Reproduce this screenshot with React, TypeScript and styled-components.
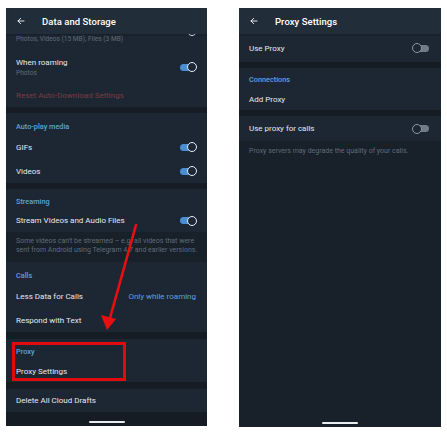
import React from "react";
import styled, { createGlobalStyle } from "styled-components";

const Global = createGlobalStyle`
  html, body { margin: 0; padding: 0; background: #ffffff; }
  body { font-family: Roboto, "Noto Sans", "Liberation Sans", sans-serif; }
`;

const C = {
  header: "#222d3a",
  row: "#1d2733",
  gap: "#151c24",
  info: "#18202a",
  text: "#e6eaee",
  sub: "#5f6c78",
  blue: "#5ea2dc",
  red: "#7a3b44",
};

const Page = styled.div`
  position: relative;
  display: flex;
  gap: 32px;
  padding: 8px 6px 0 6px;
  width: 447px;
  height: 434px;
  box-sizing: border-box;
`;

const Panel = styled.div<{ $w: number; $h: number; $bg: string }>`
  width: ${(p) => p.$w}px;
  height: ${(p) => p.$h}px;
  background: ${(p) => p.$bg};
  display: flex;
  flex-direction: column;
  overflow: hidden;
  position: relative;
`;

const Header = styled.div`
  height: 26px;
  flex: none;
  background: ${C.header};
  display: flex;
  align-items: center;
  padding-left: 11px;
  position: relative;
  z-index: 2;
  box-shadow: 0 1px 2px rgba(0, 0, 0, 0.25);
`;

const Title = styled.div`
  margin-left: 17px;
  color: #ffffff;
  font-size: 9.5px;
  font-weight: 500;
  letter-spacing: 0.05px;
`;

const Row = styled.div<{ $h: number; $pr?: number }>`
  height: ${(p) => p.$h}px;
  flex: none;
  background: ${C.row};
  display: flex;
  align-items: center;
  justify-content: space-between;
  padding: 0 ${(p) => p.$pr ?? 11}px 0 10px;
  box-sizing: border-box;
`;

const PartialRow = styled(Row)`
  align-items: flex-start;
  overflow: hidden;
`;

const Label = styled.div<{ $color?: string }>`
  color: ${(p) => p.$color || C.text};
  font-size: 8px;
  line-height: 11px;
  white-space: nowrap;
`;

const Sub = styled.div`
  color: ${C.sub};
  font-size: 6.6px;
  line-height: 10px;
  white-space: nowrap;
`;

const Stack = styled.div`
  display: flex;
  flex-direction: column;
`;

const Value = styled.div`
  color: ${C.blue};
  font-size: 8px;
  white-space: nowrap;
`;

const SectionHeader = styled.div<{ $h: number; $pt: number }>`
  height: ${(p) => p.$h}px;
  flex: none;
  box-sizing: border-box;
  padding: ${(p) => p.$pt}px 10px 0 10px;
  background: ${C.row};
  color: ${C.blue};
  font-size: 7.3px;
  font-weight: 500;
  line-height: 10px;
`;

const Gap = styled.div<{ $h: number }>`
  height: ${(p) => p.$h}px;
  flex: none;
  background: ${C.gap};
`;

const Info = styled.div<{ $h?: number; $pt: number }>`
  ${(p) => (p.$h ? `height: ${p.$h}px;` : "flex: 1;")}
  flex-shrink: 0;
  box-sizing: border-box;
  padding: ${(p) => p.$pt}px 10px 0 10px;
  background: ${C.info};
  color: ${C.sub};
  font-size: 7px;
  line-height: 9px;
  white-space: nowrap;
`;

const Toggle = styled.span<{ $on: boolean; $mt?: number }>`
  position: relative;
  flex: none;
  width: 16px;
  height: 7px;
  border-radius: 4px;
  margin-top: ${(p) => p.$mt || 0}px;
  background: ${(p) => (p.$on ? "#4a8fd4" : "#6f7b87")};
  &::after {
    content: "";
    position: absolute;
    top: -1.5px;
    ${(p) => (p.$on ? "right: -1px;" : "left: -1px;")}
    width: 10px;
    height: 10px;
    border-radius: 50%;
    box-sizing: border-box;
    border: 1.5px solid ${(p) => (p.$on ? "#e8eef4" : "#8c96a0")};
    background: ${C.row};
  }
`;

const Bottom = styled.div`
  flex: 1;
  display: flex;
  align-items: flex-end;
  justify-content: center;
  padding-bottom: 3px;
`;

const BottomFixed = styled(Bottom)`
  position: absolute;
  left: 0;
  right: 0;
  bottom: 0;
`;

const HomeBar = styled.div`
  width: 36px;
  height: 2px;
  border-radius: 1px;
  background: #e9edf0;
`;

const Highlight = styled.div`
  position: absolute;
  left: 12px;
  top: 342px;
  width: 114px;
  height: 39px;
  box-sizing: border-box;
  border: 3px solid #e00a0f;
  pointer-events: none;
`;

const ArrowSvg = styled.svg`
  position: absolute;
  left: 0;
  top: 0;
  pointer-events: none;
`;

const BackArrow = () => (
  <svg width="8" height="8" viewBox="0 0 24 24" fill="none" stroke="#ffffff" strokeWidth="2.6" strokeLinecap="round" strokeLinejoin="round">
    <path d="M21 12H3" />
    <path d="M11 4l-8 8 8 8" />
  </svg>
);

export default function App() {
  return (
    <>
      <Global />
      <Page>
        <Panel $w={201} $h={418} $bg={C.gap}>
          <Header>
            <BackArrow />
            <Title>Data and Storage</Title>
          </Header>
          <PartialRow $h={16}>
            <Sub>Photos, Videos (15 MB), Files (3 MB)</Sub>
            <Toggle $on={true} $mt={-7} />
          </PartialRow>
          <Row $h={34}>
            <Stack>
              <Label>When roaming</Label>
              <Sub>Photos</Sub>
            </Stack>
            <Toggle $on={true} />
          </Row>
          <Row $h={23}>
            <Label $color={C.red}>Reset Auto-Download Settings</Label>
          </Row>
          <Gap $h={6} />
          <SectionHeader $h={22} $pt={9}>Auto-play media</SectionHeader>
          <Row $h={24}>
            <Label>GIFs</Label>
            <Toggle $on={true} />
          </Row>
          <Row $h={24}>
            <Label>Videos</Label>
            <Toggle $on={true} />
          </Row>
          <Gap $h={6} />
          <SectionHeader $h={20} $pt={8}>Streaming</SectionHeader>
          <Row $h={23}>
            <Label>Stream Videos and Audio Files</Label>
            <Toggle $on={true} />
          </Row>
          <Info $h={30} $pt={5}>
            Some videos can't be streamed – e.g. all videos that were
            <br />
            sent from Android using Telegram 4.7 and earlier versions.
          </Info>
          <SectionHeader $h={22} $pt={9}>Calls</SectionHeader>
          <Row $h={24}>
            <Label>Less Data for Calls</Label>
            <Value>Only while roaming</Value>
          </Row>
          <Row $h={24}>
            <Label>Respond with Text</Label>
          </Row>
          <Gap $h={7} />
          <SectionHeader $h={21} $pt={8}>Proxy</SectionHeader>
          <Row $h={22}>
            <Label>Proxy Settings</Label>
          </Row>
          <Gap $h={7} />
          <Row $h={23}>
            <Label>Delete All Cloud Drafts</Label>
          </Row>
          <Bottom>
            <HomeBar />
          </Bottom>
        </Panel>

        <Panel $w={202} $h={419} $bg={C.info}>
          <Header>
            <BackArrow />
            <Title>Proxy Settings</Title>
          </Header>
          <Row $h={28} $pr={12}>
            <Label>Use Proxy</Label>
            <Toggle $on={false} />
          </Row>
          <Gap $h={6} />
          <SectionHeader $h={20} $pt={7}>Connections</SectionHeader>
          <Row $h={22}>
            <Label>Add Proxy</Label>
          </Row>
          <Gap $h={6} />
          <Row $h={25} $pr={12}>
            <Label>Use proxy for calls</Label>
            <Toggle $on={false} />
          </Row>
          <Info $pt={6}>
            Proxy servers may degrade the quality of your calls.
          </Info>
          <BottomFixed>
            <HomeBar />
          </BottomFixed>
        </Panel>

        <Highlight />
        <ArrowSvg width="447" height="434" viewBox="0 0 447 434">
          <line x1="136" y1="225" x2="110" y2="318" stroke="#e8100f" strokeWidth="2.6" strokeLinecap="round" />
          <polygon points="107,330 101,315 116,319" fill="#e8100f" />
        </ArrowSvg>
      </Page>
    </>
  );
}
